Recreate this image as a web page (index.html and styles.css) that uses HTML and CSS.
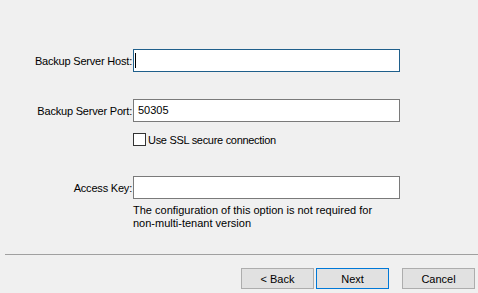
FILE: index.html
```html
<!DOCTYPE html>
<html>
<head>
<meta charset="utf-8">
<link rel="stylesheet" href="styles.css">
</head>
<body>
<div class="page">
  <div class="form">
    <div class="row row-host">
      <label class="label">Backup Server Host:</label>
      <div class="input focused"><span class="caret"></span></div>
    </div>
    <div class="row row-port">
      <label class="label">Backup Server Port:</label>
      <div class="input">50305</div>
    </div>
    <div class="row row-check">
      <span></span>
      <div class="check"><span class="box"></span><span class="check-text">Use SSL secure connection</span></div>
    </div>
    <div class="row row-key">
      <label class="label">Access Key:</label>
      <div class="input"></div>
    </div>
    <div class="row row-help">
      <span></span>
      <div class="help">The configuration of this option is not required for<br>non-multi-tenant version</div>
    </div>
  </div>
  <div class="separator"></div>
  <div class="buttons">
    <button class="btn">&lt; Back</button>
    <button class="btn default">Next</button>
    <button class="btn cancel">Cancel</button>
  </div>
</div>
</body>
</html>
```

FILE: styles.css
```css
html, body {
  margin: 0;
  padding: 0;
  background: #f0f0f0;
}
body {
  width: 478px;
  height: 293px;
  overflow: hidden;
  font-family: "Liberation Sans", Arial, sans-serif;
  font-size: 11px;
  color: #000;
}
.page {
  display: flex;
  flex-direction: column;
}
.form {
  padding-top: 49px;
  display: flex;
  flex-direction: column;
}
.row {
  display: grid;
  grid-template-columns: 133px 267px;
  align-items: center;
}
.label {
  text-align: right;
  padding-right: 1px;
  white-space: nowrap;
  letter-spacing: -0.2px;
}
.input {
  box-sizing: border-box;
  height: 23px;
  border: 1px solid #7a7a7a;
  background: #fff;
  padding: 0 4px;
  display: flex;
  align-items: center;
  line-height: 13px;
}
.input.focused {
  border-color: #1f5f8b;
  padding-left: 1px;
}
.caret {
  width: 1px;
  height: 15px;
  background: #000;
}
.row-port { margin-top: 27px; }
.row-check { margin-top: 11px; }
.row-key { margin-top: 30px; }
.row-help { margin-top: 5px; }
.check {
  display: flex;
  align-items: center;
  height: 13px;
}
.box {
  box-sizing: border-box;
  width: 13px;
  height: 13px;
  border: 1px solid #333;
  background: #fff;
  margin-right: 2px;
}
.check-text {
  letter-spacing: -0.3px;
}
.help {
  line-height: 13px;
  white-space: nowrap;
}
.separator {
  margin-top: 24px;
  margin-left: 5px;
  height: 1px;
  background: #a0a0a0;
}
.buttons {
  display: flex;
  margin-top: 13px;
  padding-left: 241px;
}
.btn {
  box-sizing: border-box;
  width: 73px;
  height: 21px;
  background: #e1e1e1;
  border: 1px solid #adadad;
  font-family: "Liberation Sans", Arial, sans-serif;
  font-size: 11px;
  color: #000;
  padding: 0;
  margin: 0;
}
.btn.default {
  border-color: #0078d7;
  margin-left: 2px;
}
.btn.cancel {
  margin-left: 13px;
}
```
